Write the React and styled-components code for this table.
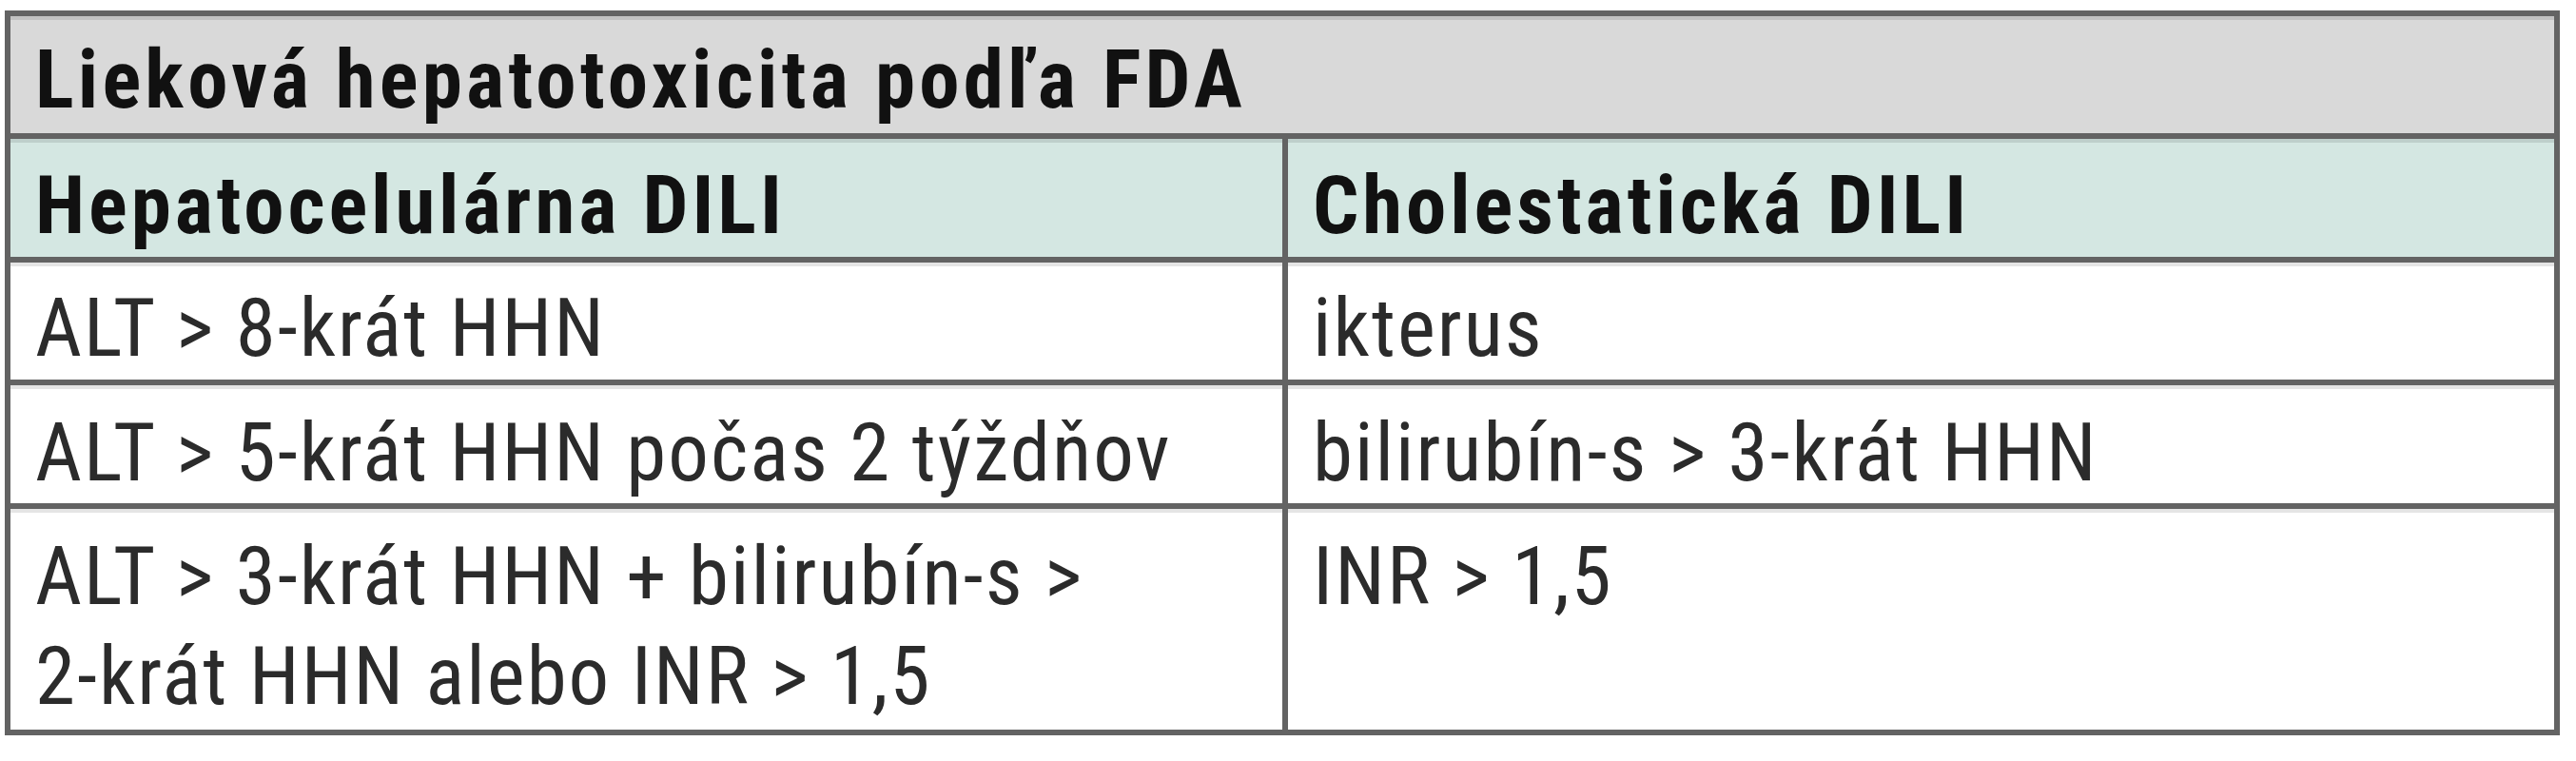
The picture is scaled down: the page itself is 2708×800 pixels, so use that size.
import React from "react";
import styled, { createGlobalStyle } from "styled-components";

const Global = createGlobalStyle`
  html, body {
    margin: 0;
    padding: 0;
    background: #ffffff;
  }
  body {
    font-family: Roboto, "Open Sans", "Liberation Sans", sans-serif;
    color: #262626;
  }
`;

const Table = styled.div`
  box-sizing: border-box;
  width: 2686px;
  margin: 11px 0 0 5px;
  border: 6px solid #636363;
`;

const TitleRow = styled.div`
  box-sizing: border-box;
  height: 123px;
  padding: 15px 26px 0;
  background: #d9d9d9;
  box-shadow: inset 0 4px 0 rgba(0, 0, 0, 0.1);
  font-size: 85px;
  line-height: 105px;
  font-weight: 700;
  font-stretch: 87.5%;
  letter-spacing: 4.2px;
  color: #111111;
`;

const Row = styled.div`
  display: grid;
  grid-template-columns: 1fr 1fr;
  height: ${(p) => p.$h}px;
  border-top: 6px solid #636363;
  background: ${(p) => (p.$head ? "#d4e7e2" : "#ffffff")};
  box-shadow: inset 0 4px 0 rgba(0, 0, 0, 0.1);
`;

const Cell = styled.div`
  box-sizing: border-box;
  padding: ${(p) => p.$top}px 26px 0;
  font-size: 85px;
  line-height: 105px;
  font-weight: ${(p) => (p.$head ? 700 : 400)};
  font-stretch: 87.5%;
  letter-spacing: ${(p) => (p.$head ? 3.9 : 2)}px;
  color: ${(p) => (p.$head ? "#111111" : "#2b2b2b")};
  & + & {
    border-left: 6px solid #636363;
  }
`;

const rows = [
  { h: 123, top: 17, a: "ALT > 8-krát HHN", b: "ikterus" },
  { h: 124, top: 19, a: "ALT > 5-krát HHN počas 2 týždňov", b: "bilirubín-s > 3-krát HHN" },
  {
    h: 232,
    top: 19,
    a: (
      <>
        ALT &gt; 3-krát HHN + bilirubín-s &gt;
        <br />
        2-krát HHN alebo INR &gt; 1,5
      </>
    ),
    b: "INR > 1,5",
  },
];

export default function App() {
  return (
    <>
      <Global />
      <Table>
        <TitleRow>Lieková hepatotoxicita podľa FDA</TitleRow>
        <Row $h={124} $head>
          <Cell $head $top={18}>Hepatocelulárna DILI</Cell>
          <Cell $head $top={18}>Cholestatická DILI</Cell>
        </Row>
        {rows.map((r, i) => (
          <Row key={i} $h={r.h}>
            <Cell $top={r.top}>{r.a}</Cell>
            <Cell $top={r.top}>{r.b}</Cell>
          </Row>
        ))}
      </Table>
    </>
  );
}
